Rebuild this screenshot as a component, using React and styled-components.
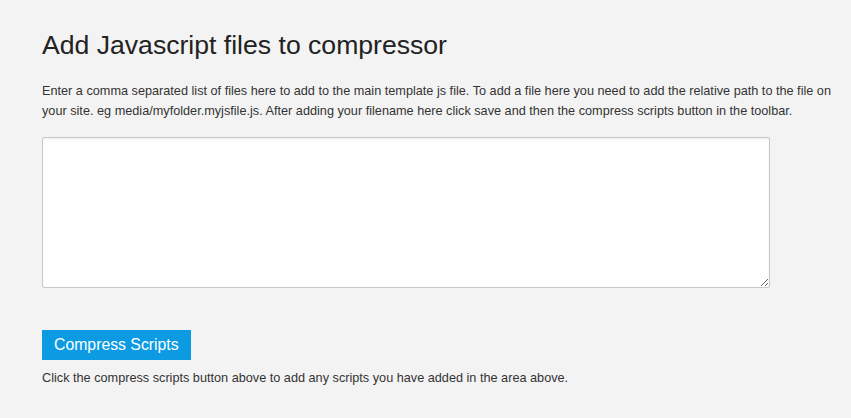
import React from 'react';
import styled, { createGlobalStyle } from 'styled-components';

const GlobalStyle = createGlobalStyle`
  html, body {
    margin: 0;
    padding: 0;
    background: #f3f3f3;
  }
  body {
    font-family: 'Liberation Sans', Arial, sans-serif;
    color: #333;
  }
`;

const Page = styled.div`
  padding: 25px 42px 20px;
  min-height: 418px;
  box-sizing: border-box;
  background: #f3f3f3;
`;

const Title = styled.h1`
  margin: 0 0 16px;
  font-size: 26.6px;
  font-weight: 400;
  line-height: 40px;
  color: #222;
`;

const Help = styled.p`
  margin: 0 0 16px;
  width: 792px;
  font-size: 12.7px;
  line-height: 20px;
  color: #333;
`;

const FileList = styled.textarea`
  display: block;
  width: 728px;
  height: 151px;
  box-sizing: border-box;
  margin: 0 0 42px;
  padding: 6px 8px;
  border: 1px solid #c8c8c8;
  border-radius: 2px;
  background: #fff;
  box-shadow: inset 0 1px 2px rgba(0, 0, 0, 0.08);
  font-family: inherit;
  font-size: 13px;
  resize: both;
  outline: none;
`;

const CompressBtn = styled.button`
  display: block;
  height: 30px;
  padding: 0 12px;
  border: 0;
  border-radius: 0;
  background: #0c9be2;
  color: #fff;
  font-family: inherit;
  font-size: 15.8px;
  cursor: pointer;
`;

const Note = styled.p`
  margin: 8px 0 0;
  font-size: 12.7px;
  line-height: 20px;
  color: #333;
`;

const App = () => {
  return (
    <>
      <GlobalStyle />
      <Page>
        <Title>Add Javascript files to compressor</Title>
        <Help>
          Enter a comma separated list of files here to add to the main template js file. To add a file here you
          need to add the relative path to the file on your site. eg media/myfolder.myjsfile.js. After adding your
          filename here click save and then the compress scripts button in the toolbar.
        </Help>
        <FileList />
        <CompressBtn type='button'>Compress Scripts</CompressBtn>
        <Note>Click the compress scripts button above to add any scripts you have added in the area above.</Note>
      </Page>
    </>
  );
};

export default App;
